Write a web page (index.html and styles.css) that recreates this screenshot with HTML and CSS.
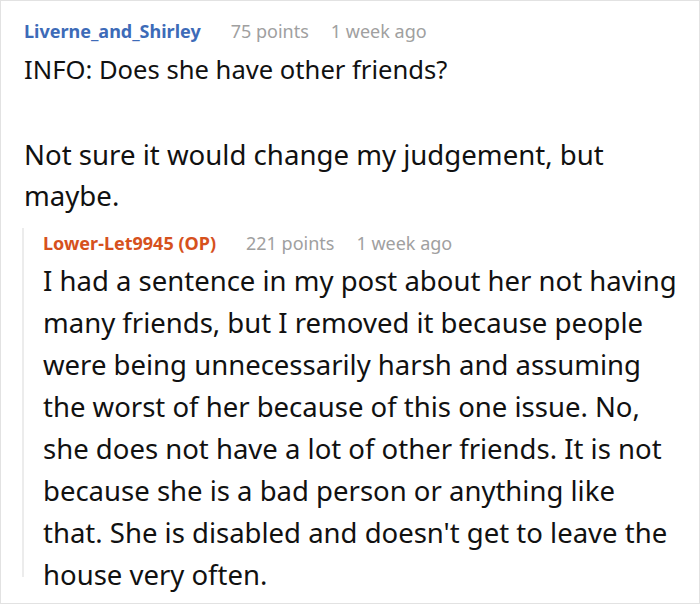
FILE: index.html
```html
<!DOCTYPE html>
<html>
<head>
<meta charset="utf-8">
<link rel="stylesheet" href="styles.css">
</head>
<body>
<div class="frame">
  <div class="comment">
    <div class="meta">
      <span class="user">Liverne_and_Shirley</span>
      <span class="info">75 points</span>
      <span class="info">1 week ago</span>
    </div>
    <div class="body">
      <p>INFO: Does she have other friends?</p>
      <p class="wide">Not sure it would change my judgement, but maybe.</p>
    </div>
    <div class="reply">
      <div class="meta">
        <span class="user op">Lower-Let9945 (OP)</span>
        <span class="info">221 points</span>
        <span class="info">1 week ago</span>
      </div>
      <div class="body reply-body">
        <p>I had a sentence in my post about her not having<br>many friends, but I removed it because people<br>were being unnecessarily harsh and assuming<br>the worst of her because of this one issue. No,<br>she does not have a lot of other friends. It is not<br>because she is a bad person or anything like<br>that. She is disabled and doesn't get to leave the<br>house very often.</p>
      </div>
    </div>
  </div>
</div>
</body>
</html>
```
FILE: styles.css
```css
html, body {
  margin: 0;
  padding: 0;
  background: #fff;
}
.frame {
  width: 700px;
  height: 604px;
  box-sizing: border-box;
  border: 1px solid #e2e2e2;
  overflow: hidden;
  font-family: "Noto Sans", "Open Sans", sans-serif;
  color: #111;
}
.comment {
  padding: 17px 0 0 23px;
}
.meta {
  display: flex;
  align-items: baseline;
  gap: 22px;
  font-size: 18px;
  line-height: 26px;
}
.user {
  font-weight: 700;
  color: #3d6bb8;
  margin-right: 8px;
}
.user.op {
  color: #d6511d;
}
.info {
  color: #a0a0a0;
}
.body {
  font-size: 25.6px;
  line-height: 40.5px;
  padding-top: 6px;
  padding-right: 70px;
}
.body p {
  margin: 0 0 43.5px 0;
}
.body p:last-child {
  margin-bottom: 0;
}
.body p.wide {
  font-size: 27.6px;
}
.reply {
  margin-top: 13px;
  margin-left: -2px;
  border-left: 2px solid #ececec;
  padding-left: 19px;
  padding-top: 2px;
  height: 347px;
}
.reply-body {
  font-size: 27.5px;
  line-height: 42px;
  padding-top: 4px;
  padding-right: 0;
  white-space: nowrap;
}
```
